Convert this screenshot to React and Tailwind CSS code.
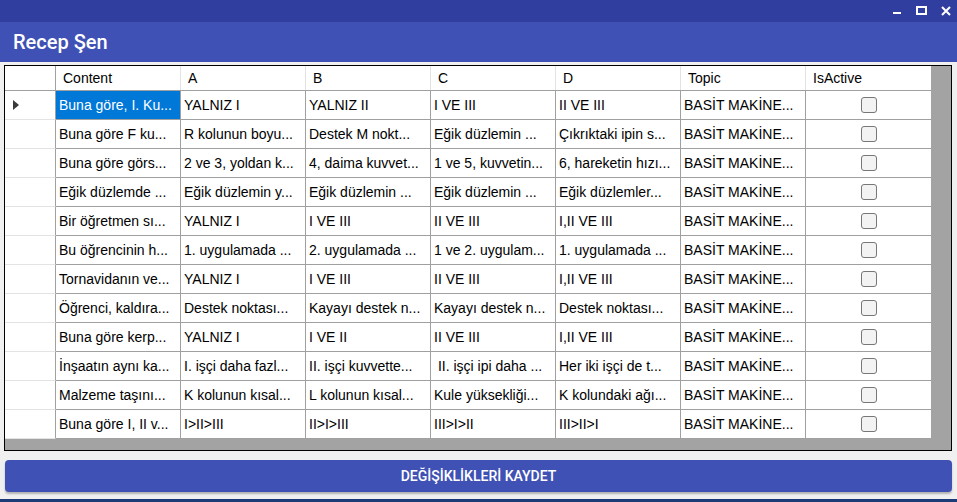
import React from 'react';

const columns = ['Content', 'A', 'B', 'C', 'D', 'Topic', 'IsActive'];

// each row: content, A, B, C, D (topic is the same everywhere)
const rows = [
  ['Buna göre, I. Ku...', 'YALNIZ I', 'YALNIZ II', 'I VE III', 'II VE III'],
  ['Buna göre F ku...', 'R kolunun boyu...', 'Destek M nokt...', 'Eğik düzlemin ...', 'Çıkrıktaki ipin s...'],
  ['Buna göre görs...', '2 ve 3, yoldan k...', '4, daima kuvvet...', '1 ve 5, kuvvetin...', '6, hareketin hızı...'],
  ['Eğik düzlemde ...', 'Eğik düzlemin y...', 'Eğik düzlemin ...', 'Eğik düzlemin ...', 'Eğik düzlemler...'],
  ['Bir öğretmen sı...', 'YALNIZ I', 'I VE III', 'II VE III', 'I,II VE III'],
  ['Bu öğrencinin h...', '1. uygulamada ...', '2. uygulamada ...', '1 ve 2. uygulam...', '1. uygulamada ...'],
  ['Tornavidanın ve...', 'YALNIZ I', 'I VE III', 'II VE III', 'I,II VE III'],
  ['Öğrenci, kaldıra...', 'Destek noktası...', 'Kayayı destek n...', 'Kayayı destek n...', 'Destek noktası...'],
  ['Buna göre kerp...', 'YALNIZ I', 'I VE II', 'II VE III', 'I,II VE III'],
  ['İnşaatın aynı ka...', 'I. işçi daha fazl...', 'II. işçi kuvvette...', '\u00a0II. işçi ipi daha ...', 'Her iki işçi de t...'],
  ['Malzeme taşını...', 'K kolunun kısal...', 'L kolunun kısal...', 'Kule yüksekliği...', 'K kolundaki ağı...'],
  ['Buna göre I, II v...', 'I>II>III', 'II>I>III', 'III>I>II', 'III>II>I'],
];

const WindowControls = () => (
  <div className="flex items-center gap-[14px] pr-[6px] text-white">
    <svg width="9" height="10" viewBox="0 0 9 10">
      <rect x="0" y="6" width="8" height="2" fill="currentColor" />
    </svg>
    <svg width="11" height="10" viewBox="0 0 11 10">
      <rect x="1" y="1" width="9" height="7" fill="none" stroke="currentColor" strokeWidth="2" />
    </svg>
    <svg width="10" height="10" viewBox="0 0 10 10">
      <path d="M1 1 L9 9 M9 1 L1 9" stroke="currentColor" strokeWidth="2" />
    </svg>
  </div>
);

const Checkbox = () => (
  <span className="block h-[16px] w-[16px] rounded-[3px] border border-[#777777] bg-[#f3f3f3]" />
);

export default function App() {
  return (
    <div className="flex h-[502px] w-[957px] flex-col overflow-hidden bg-[#f0f0f0] font-['Liberation_Sans',Arial,sans-serif]">
      {/* window title bar */}
      <div className="flex h-[22px] shrink-0 items-center justify-end bg-[#303f9f]">
        <WindowControls />
      </div>

      {/* app header */}
      <div className="flex h-[40px] shrink-0 items-center bg-[#3f51b5] pl-[13px]">
        <h1 className="font-['Roboto',sans-serif] text-[20px] font-medium text-white">Recep Şen</h1>
      </div>

      {/* data grid */}
      <div className="ml-[4px] mt-[3px] h-[386px] w-[948px] shrink-0 border border-black bg-[#a3a3a3]">
        <div className="w-[926px] text-[14px] text-black">
          <div className="flex h-[25px] border-b border-[#a0a0a0] bg-white">
            <div className="w-[51px] border-r border-[#a0a0a0]" />
            {columns.map((col, i) => (
              <div
                key={col}
                className={`flex w-[125px] items-center pl-[7px] ${i < columns.length - 1 ? 'border-r border-[#e3e3e3]' : ''}`}
              >
                {col}
              </div>
            ))}
          </div>

          {rows.map((row, r) => (
            <div key={r} className="flex h-[29px]">
              <div className="flex w-[51px] items-center border-b border-r border-b-[#e3e3e3] border-r-[#a0a0a0] bg-white pl-[8px]">
                {r === 0 && (
                  <svg width="6" height="10" viewBox="0 0 6 10">
                    <polygon points="0,0 6,5 0,10" fill="#3a3a3a" />
                  </svg>
                )}
              </div>
              {row.map((cell, c) => (
                <div
                  key={c}
                  className={`flex w-[125px] items-center overflow-hidden whitespace-nowrap border-b border-r border-[#a0a0a0] pl-[3px] ${
                    r === 0 && c === 0 ? 'bg-[#0078d7] text-white' : 'bg-white'
                  }`}
                >
                  {cell}
                </div>
              ))}
              <div className="flex w-[125px] items-center overflow-hidden whitespace-nowrap border-b border-r border-[#a0a0a0] bg-white pl-[3px]">
                BASİT MAKİNE...
              </div>
              <div className="flex w-[125px] items-center justify-center border-b border-[#a0a0a0] bg-white">
                <Checkbox />
              </div>
            </div>
          ))}
        </div>
      </div>

      {/* save button */}
      <button className="mx-[5px] mt-[9px] h-[32px] shrink-0 rounded-[4px] bg-[#3f51b5] font-['Roboto',sans-serif] text-[14px] font-medium text-white shadow-[0_2px_2px_rgba(0,0,0,0.25)]">
        DEĞİŞİKLİKLERİ KAYDET
      </button>

      <div className="mt-auto h-[3px] shrink-0 bg-[#1b3a78]" />
    </div>
  );
}
